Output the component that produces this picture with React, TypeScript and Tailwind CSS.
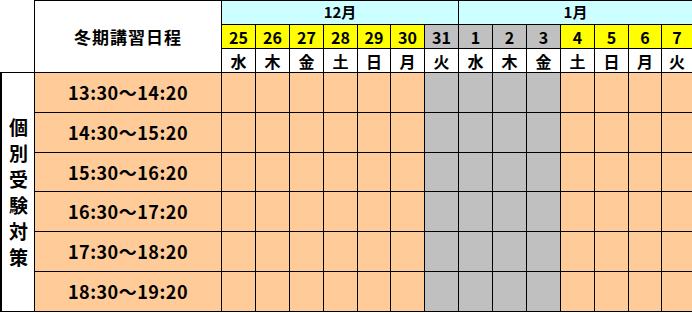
const days = [
  { d: '25', w: '水', bg: 'bg-[#ffff00]' },
  { d: '26', w: '木', bg: 'bg-[#ffff00]' },
  { d: '27', w: '金', bg: 'bg-[#ffff00]' },
  { d: '28', w: '土', bg: 'bg-[#ffff00]' },
  { d: '29', w: '日', bg: 'bg-[#ffff00]' },
  { d: '30', w: '月', bg: 'bg-[#ffff00]' },
  { d: '31', w: '火', bg: 'bg-[#c0c0c0]' },
  { d: '1', w: '水', bg: 'bg-[#c0c0c0]' },
  { d: '2', w: '木', bg: 'bg-[#c0c0c0]' },
  { d: '3', w: '金', bg: 'bg-[#c0c0c0]' },
  { d: '4', w: '土', bg: 'bg-[#ffff00]' },
  { d: '5', w: '日', bg: 'bg-[#ffff00]' },
  { d: '6', w: '月', bg: 'bg-[#ffff00]' },
  { d: '7', w: '火', bg: 'bg-[#ffff00]' },
];

const closed = ['31', '1', '2', '3'];

const slots = [
  '13:30〜14:20',
  '14:30〜15:20',
  '15:30〜16:20',
  '16:30〜17:20',
  '17:30〜18:20',
  '18:30〜19:20',
];

const font = { fontFamily: '"Noto Sans CJK JP", "Noto Sans", sans-serif' };

export default function App() {
  return (
    <div className="h-[313px] w-[692px] overflow-hidden bg-white text-black" style={font}>
      <div className="grid grid-cols-[34px_187px_34px_34px_34px_34px_33px_34px_34px_34px_34px_34px_34px_34px_33px_31px] grid-rows-[24px_24px_24px_40px_40px_39px_40px_40px_41px]">
        {/* blank corner */}
        <div className="col-start-1 row-span-3 row-start-1" />

        <div className="col-start-2 row-span-3 row-start-1 flex items-center justify-center border-l border-t border-black bg-white text-[17px] font-bold tracking-[1px]">
          冬期講習日程
        </div>

        <div className="col-span-7 col-start-3 row-start-1 flex items-center justify-center border-l border-t border-black bg-[#ccffff] text-[15px] font-bold">
          12月
        </div>
        <div className="col-span-7 col-start-10 row-start-1 flex items-center justify-center border-l border-t border-black bg-[#ccffff] text-[15px] font-bold">
          1月
        </div>

        {days.map((x, i) => (
          <div
            key={'d' + i}
            className={`row-start-2 flex items-center justify-center border-l border-t border-black text-[16px] font-bold ${x.bg}`}
          >
            {x.d}
          </div>
        ))}
        {days.map((x, i) => (
          <div
            key={'w' + i}
            className="row-start-3 flex items-center justify-center border-l border-t border-black bg-white text-[16px] font-bold"
          >
            {x.w}
          </div>
        ))}

        <div className="col-start-1 row-span-6 row-start-4 flex flex-col items-center justify-center border-b border-l-2 border-t border-black bg-white pl-px text-[19px] font-bold leading-[26px]">
          {'個別受験対策'.split('').map((c) => (
            <span key={c}>{c}</span>
          ))}
        </div>

        {slots.map((s, r) => (
          <div key={s} className="contents">
            <div
              className={`col-start-2 flex items-center justify-center border-l border-t border-black bg-[#ffcc99] text-[18px] font-bold tracking-[0.5px] ${
                r === slots.length - 1 ? 'border-b' : ''
              }`}
            >
              {s}
            </div>
            {days.map((x, i) => (
              <div
                key={s + i}
                className={`border-l border-t border-black ${
                  closed.includes(x.d) ? 'bg-[#c0c0c0]' : 'bg-[#ffcc99]'
                } ${r === slots.length - 1 ? 'border-b' : ''}`}
              />
            ))}
          </div>
        ))}
      </div>
    </div>
  );
}
